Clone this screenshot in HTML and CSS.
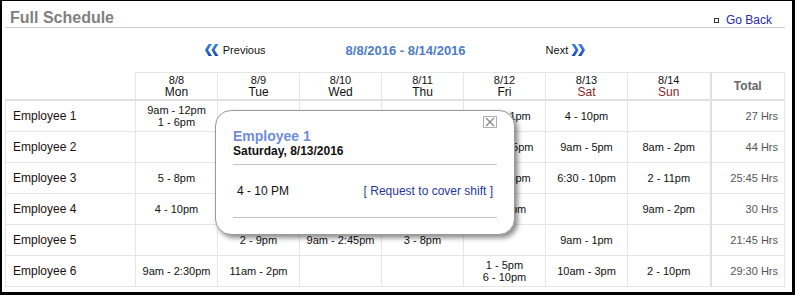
FILE: index.html
```html
<!DOCTYPE html>
<html lang="en">
<head>
  <meta charset="UTF-8">
  <meta name="viewport" content="width=device-width, initial-scale=1.0">
  <title>Full Schedule</title>
  <link rel="stylesheet" href="styles.css">
</head>
<body>
  <div class="page">
    <div class="page-head">
      <h1>Full Schedule</h1>
      <a class="go-back" href="#"><span class="bullet"></span>Go Back</a>
    </div>

    <div class="week-nav">
      <a class="prev" href="#">
        <svg width="14" height="12" viewBox="0 0 14 12">
          <defs>
            <linearGradient id="chevL" x1="0" y1="0" x2="0" y2="1">
              <stop offset="0" stop-color="#3f86e6"/>
              <stop offset="1" stop-color="#1549b0"/>
            </linearGradient>
          </defs>
          <polygon points="7,0 3,6 7,12 3.6,12 0,6 3.6,0" fill="url(#chevL)"/>
          <polygon points="13.5,0 9.5,6 13.5,12 10.1,12 6.5,6 10.1,0" fill="url(#chevL)"/>
        </svg>
        Previous
      </a>
      <span class="range">8/8/2016 - 8/14/2016</span>
      <a class="next" href="#">
        Next
        <svg width="14" height="12" viewBox="0 0 14 12">
          <defs>
            <linearGradient id="chevR" x1="0" y1="0" x2="0" y2="1">
              <stop offset="0" stop-color="#3f86e6"/>
              <stop offset="1" stop-color="#1549b0"/>
            </linearGradient>
          </defs>
          <polygon points="0.5,0 4.5,6 0.5,12 3.9,12 7.5,6 3.9,0" fill="url(#chevR)"/>
          <polygon points="7,0 11,6 7,12 10.4,12 14,6 10.4,0" fill="url(#chevR)"/>
        </svg>
      </a>
    </div>

    <table class="schedule">
      <colgroup>
        <col class="col-name">
        <col class="col-day"><col class="col-day"><col class="col-day"><col class="col-day">
        <col class="col-day"><col class="col-day"><col class="col-sun">
        <col class="col-total">
      </colgroup>
      <thead>
        <tr>
          <th class="blank"></th>
          <th><span class="date">8/8</span><span class="day">Mon</span></th>
          <th><span class="date">8/9</span><span class="day">Tue</span></th>
          <th><span class="date">8/10</span><span class="day">Wed</span></th>
          <th><span class="date">8/11</span><span class="day">Thu</span></th>
          <th><span class="date">8/12</span><span class="day">Fri</span></th>
          <th><span class="date">8/13</span><span class="day weekend">Sat</span></th>
          <th class="sun"><span class="date">8/14</span><span class="day weekend">Sun</span></th>
          <th class="total">Total</th>
        </tr>
      </thead>
      <tbody>
        <tr>
          <td class="name">Employee 1</td>
          <td>9am - 12pm<br>1 - 6pm</td>
          <td></td>
          <td></td>
          <td></td>
          <td>9am - 1pm</td>
          <td>4 - 10pm</td>
          <td class="sun"></td>
          <td class="total">27 Hrs</td>
        </tr>
        <tr>
          <td class="name">Employee 2</td>
          <td></td>
          <td></td>
          <td></td>
          <td></td>
          <td>11am - 5pm</td>
          <td>9am - 5pm</td>
          <td class="sun">8am - 2pm</td>
          <td class="total">44 Hrs</td>
        </tr>
        <tr>
          <td class="name">Employee 3</td>
          <td>5 - 8pm</td>
          <td></td>
          <td></td>
          <td></td>
          <td>9am - 3pm</td>
          <td>6:30 - 10pm</td>
          <td class="sun">2 - 11pm</td>
          <td class="total">25:45 Hrs</td>
        </tr>
        <tr>
          <td class="name">Employee 4</td>
          <td>4 - 10pm</td>
          <td></td>
          <td></td>
          <td></td>
          <td>4 - 10pm</td>
          <td></td>
          <td class="sun">9am - 2pm</td>
          <td class="total">30 Hrs</td>
        </tr>
        <tr>
          <td class="name">Employee 5</td>
          <td></td>
          <td>2 - 9pm</td>
          <td>9am - 2:45pm</td>
          <td>3 - 8pm</td>
          <td></td>
          <td>9am - 1pm</td>
          <td class="sun"></td>
          <td class="total">21:45 Hrs</td>
        </tr>
        <tr>
          <td class="name">Employee 6</td>
          <td>9am - 2:30pm</td>
          <td>11am - 2pm</td>
          <td></td>
          <td></td>
          <td>1 - 5pm<br>6 - 10pm</td>
          <td>10am - 3pm</td>
          <td class="sun">2 - 10pm</td>
          <td class="total">29:30 Hrs</td>
        </tr>
      </tbody>
    </table>

    <div class="shift-popup">
      <a class="popup-close" href="#">
        <svg width="12" height="10" viewBox="0 0 12 10">
          <line x1="2" y1="1" x2="10" y2="9" stroke="#8a8a8a" stroke-width="1.2"/>
          <line x1="10" y1="1" x2="2" y2="9" stroke="#8a8a8a" stroke-width="1.2"/>
        </svg>
      </a>
      <div class="popup-head">
        <div class="popup-name">Employee 1</div>
        <div class="popup-date">Saturday, 8/13/2016</div>
      </div>
      <div class="popup-shift">
        <span>4 - 10 PM</span>
        <a href="#">[ Request to cover shift ]</a>
      </div>
    </div>
  </div>
</body>
</html>
```

FILE: styles.css
```css
body {
  margin: 0;
  background-color: #ffffff;
  font-family: "Liberation Sans", Arial, sans-serif;
  color: #111;
}
a {
  text-decoration: none;
}
.page {
  position: relative;
  box-sizing: border-box;
  width: 795px;
  height: 295px;
  padding: 0 7px 0 3px;
  border-style: solid;
  border-color: #000;
  border-width: 1px 3px 3px 2px;
}

/* title bar */
.page-head {
  display: flex;
  justify-content: space-between;
  align-items: baseline;
  padding-top: 7px;
  border-bottom: 1px solid #c8c8c8;
}
.page-head h1 {
  margin: 0 0 0 5px;
  font-size: 16px;
  line-height: 19px;
  color: #7f7f7f;
}
.go-back {
  display: flex;
  align-items: center;
  margin-right: 13px;
  font-size: 12px;
  color: #2a2aa8;
}
.go-back .bullet {
  width: 3px;
  height: 3px;
  border: 1px solid #333;
  margin-right: 7px;
  margin-top: 1px;
}

/* week navigation */
.week-nav {
  display: flex;
  justify-content: center;
  align-items: center;
  gap: 80px;
  height: 44px;
}
.week-nav a {
  display: flex;
  align-items: center;
  font-size: 11px;
  color: #111;
}
.prev svg {
  margin-right: 4px;
}
.next svg {
  margin-left: 3px;
}
.range {
  font-size: 13px;
  font-weight: bold;
  color: #4d7cc6;
}

/* schedule grid */
.schedule {
  width: 779px;
  border-collapse: collapse;
  table-layout: fixed;
}
.col-name { width: 130px; }
.col-day { width: 82px; }
.col-sun { width: 83px; }
.col-total { width: 74px; }

.schedule th,
.schedule td {
  border: 1px solid #e6e6e6;
  padding: 0;
  text-align: center;
  vertical-align: middle;
}
.schedule thead th {
  height: 26px;
  font-weight: normal;
  border-bottom: 2px solid #e0e0e0;
}
.schedule th.blank {
  border-top: none;
  border-left: none;
}
.schedule .sun {
  border-right: 2px solid #e0e0e0;
}
.date {
  display: block;
  font-size: 11px;
  line-height: 12px;
}
.day {
  display: block;
  font-size: 12px;
  line-height: 12px;
}
.day.weekend {
  color: #8e1f1f;
}
.schedule th.total {
  font-size: 12px;
  font-weight: bold;
  color: #666;
}
.schedule td {
  height: 30px;
  font-size: 11px;
  line-height: 12px;
}
.schedule td.name {
  text-align: left;
  padding-left: 7px;
  font-size: 12px;
  color: #1c1010;
}
.schedule td.total {
  text-align: right;
  padding-right: 6px;
  color: #555;
}

/* shift details bubble */
.shift-popup {
  position: absolute;
  left: 213px;
  top: 109px;
  box-sizing: border-box;
  width: 300px;
  height: 125px;
  padding: 17px 17px 0;
  background-color: #fff;
  border: 1px solid #9a9a9a;
  border-radius: 16px;
  box-shadow: 3px 3px 5px rgba(0, 0, 0, 0.45);
}
.popup-close {
  position: absolute;
  top: 5px;
  left: 267px;
  display: flex;
  align-items: center;
  justify-content: center;
  width: 12px;
  height: 10px;
  border: 1px solid #b0b0b0;
}
.popup-head {
  padding-bottom: 6px;
  border-bottom: 1px solid #c4c4c4;
}
.popup-name {
  font-size: 14px;
  line-height: 16px;
  font-weight: bold;
  color: #6f8ddb;
}
.popup-date {
  font-size: 12px;
  line-height: 14px;
  font-weight: bold;
}
.popup-shift {
  display: flex;
  justify-content: space-between;
  align-items: center;
  height: 52px;
  padding: 0 4px;
  font-size: 12px;
  border-bottom: 1px solid #c4c4c4;
}
.popup-shift a {
  color: #26389c;
}
```
